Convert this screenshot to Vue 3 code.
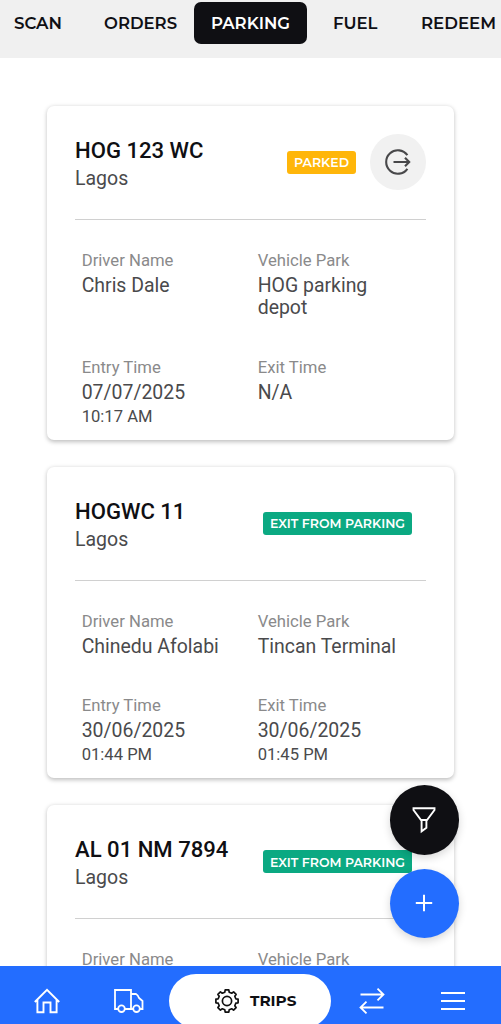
<script setup>
const tabs = [
  { name: 'SCAN', width: 48 },
  { name: 'ORDERS', width: 73 },
  { name: 'PARKING', width: 79, active: true },
  { name: 'FUEL', width: 44.5 },
  { name: 'REDEEM', width: 75 },
]
const trips = [
  {
    plate: 'HOG 123 WC', city: 'Lagos', status: 'PARKED', parked: true,
    fields: [
      { label: 'Driver Name', value: 'Chris Dale' },
      { label: 'Vehicle Park', value: 'HOG parking depot' },
      { label: 'Entry Time', value: '07/07/2025', time: '10:17 AM' },
      { label: 'Exit Time', value: 'N/A' },
    ],
  },
  {
    plate: 'HOGWC 11', city: 'Lagos', status: 'EXIT FROM PARKING',
    fields: [
      { label: 'Driver Name', value: 'Chinedu Afolabi' },
      { label: 'Vehicle Park', value: 'Tincan Terminal' },
      { label: 'Entry Time', value: '30/06/2025', time: '01:44 PM' },
      { label: 'Exit Time', value: '30/06/2025', time: '01:45 PM' },
    ],
  },
  {
    plate: 'AL 01 NM 7894', city: 'Lagos', status: 'EXIT FROM PARKING',
    fields: [
      { label: 'Driver Name', value: '' },
      { label: 'Vehicle Park', value: '' },
    ],
  },
]
</script>

<template>
  <div class="app">
    <nav class="tabs">
      <a v-for="t in tabs" :key="t.name" class="tab" :class="{ active: t.active }">
        <svg :width="t.width" height="24"><text class="brand" x="0" y="17.5" :textLength="t.width" lengthAdjust="spacingAndGlyphs">{{ t.name }}</text></svg>
      </a>
    </nav>

    <main class="list">
      <article v-for="trip in trips" :key="trip.plate" class="card">
        <header class="head">
          <div>
            <h2 class="plate">{{ trip.plate }}</h2>
            <p class="city">{{ trip.city }}</p>
          </div>
          <div class="status">
            <span class="badge" :class="{ parked: trip.parked }">
              <svg :width="trip.parked ? 55 : 135" height="22"><text class="brand small" x="0" y="15.7" :textLength="trip.parked ? 55 : 135" lengthAdjust="spacingAndGlyphs">{{ trip.status }}</text></svg>
            </span>
            <button v-if="trip.parked" class="exit" aria-label="Exit">
              <svg width="28" height="28" viewBox="0 0 28 28" fill="none" stroke="#48484a" stroke-width="2.1">
                <path d="M23.4 7.2A11.7 11.7 0 1 0 23.4 20.8M9.5 14H25.2M21 9.8L25.2 14L21 18.2" />
              </svg>
            </button>
          </div>
        </header>
        <div class="fields">
          <div v-for="f in trip.fields" :key="f.label" class="field">
            <div class="label">{{ f.label }}</div>
            <div class="value">{{ f.value }}</div>
            <div v-if="f.time" class="time">{{ f.time }}</div>
          </div>
        </div>
      </article>
    </main>

    <div class="fabs">
      <button class="fab dark" aria-label="Filter">
        <svg width="26" height="28" viewBox="0 0 26 28" fill="none" stroke="#fff" stroke-width="1.9">
          <path d="M2.5 2.3H23.5V4L16 14H10L2.5 4ZM10.6 14V25.3L15.4 21.7V14" />
        </svg>
      </button>
      <button class="fab blue" aria-label="Add">
        <svg width="18" height="18" viewBox="0 0 18 18" stroke="#fff" stroke-width="2"><path d="M9 .8V17.2M.8 9H17.2" /></svg>
      </button>
    </div>

    <nav class="bottom">
      <div class="item home">
        <svg width="28" height="26" viewBox="0 0 28 26" fill="none" stroke="#fff" stroke-width="1.9">
          <path d="M1.8 14L14 1.8L26.2 14M4.4 11.5V24.3H10.5V14.5H17.5V24.3H23.6V11.5" />
        </svg>
      </div>
      <div class="item truck">
        <svg width="30" height="24" viewBox="0 0 30 24" fill="none" stroke="#fff" stroke-width="1.8">
          <path d="M4 20H1V1H17V20H11M17 5H22Q24 6 25 9L28.5 12V20H26M17 20H19" />
          <circle cx="7.5" cy="19.7" r="3.3" /><circle cx="22.5" cy="19.7" r="3.3" />
        </svg>
      </div>
      <div class="pill">
        <svg width="24" height="24" viewBox="0 0 24 24" fill="none" stroke="#111" stroke-width="1.7" stroke-linejoin="round">
          <path d="M9.8 3.2L10.2 .9H13.8L14.2 3.2L16.7 4.2L18.6 2.9L21.1 5.4L19.8 7.3L20.8 9.8L23.1 10.2V13.8L20.8 14.2L19.8 16.7L21.1 18.6L18.6 21.1L16.7 19.8L14.2 20.8L13.8 23.1H10.2L9.8 20.8L7.3 19.8L5.4 21.1L2.9 18.6L4.2 16.7L3.2 14.2L.9 13.8V10.2L3.2 9.8L4.2 7.3L2.9 5.4L5.4 2.9L7.3 4.2Z" />
          <circle cx="12" cy="12" r="4.6" />
        </svg>
        <svg width="47" height="24"><text class="brand trips" x="0" y="17" textLength="46.5" lengthAdjust="spacingAndGlyphs">TRIPS</text></svg>
      </div>
      <div class="item swap">
        <svg width="26" height="26" viewBox="0 0 26 26" fill="none" stroke="#fff" stroke-width="1.8">
          <path d="M1.5 6.5H24.5M18.5 .6L24.5 6.5L18.5 12.4M24.5 19.5H1.5M7.5 13.6L1.5 19.5L7.5 25.4" />
        </svg>
      </div>
      <div class="item menu">
        <svg width="24" height="18" viewBox="0 0 24 18" stroke="#fff" stroke-width="1.9"><path d="M0 1H24M0 9H24M0 17H24" /></svg>
      </div>
    </nav>
  </div>
</template>

<style>
body { margin: 0; background: #fff; overflow: hidden; }
</style>

<style scoped>
.app { position: relative; width: 501px; height: 1024px; overflow: hidden; display: flex; flex-direction: column; background: #fff; font-family: Roboto, sans-serif; color: #4a4a4c; }
svg { display: block; flex: none; overflow: visible; }
button { border: 0; padding: 0; display: flex; align-items: center; justify-content: center; }
.brand { font: 600 16.6px Montserrat, Lato, sans-serif; fill: #0f0f14; }
.small { font-size: 12.8px; fill: #fff; }
.trips { font-size: 15.3px; font-weight: 700; }
.tabs { flex: none; height: 58px; box-sizing: border-box; padding: 2px 0 0 1px; background: #f0f0f0; display: flex; align-items: flex-start; margin-left: -4px; }
.tab { flex: none; height: 42px; padding: 0 17px; border-radius: 7px; display: flex; align-items: center; margin-right: 9px; }
.tab:nth-child(2) { margin-left: -1px; margin-right: 0; }
.tab:nth-child(4) { margin-right: 9.5px; }
.tab.active { background: #0f0f13; }
.tab.active .brand { fill: #fff; }
.list { flex: 1; min-height: 0; padding: 48px 47px 0; display: flex; flex-direction: column; gap: 27px; overflow: hidden; }
.card { flex: none; width: 407px; box-sizing: border-box; padding: 0 28px 13.4px; border-radius: 7px; background: #fff; box-shadow: 0 1.4px 4px rgba(0, 0, 0, .25); }
.head { height: 113.6px; box-sizing: border-box; border-bottom: 1.4px solid #d0d0d0; padding-top: 28px; display: flex; justify-content: space-between; align-items: flex-start; }
.plate { margin: 0; font-size: 22.1px; line-height: 32px; font-weight: 500; color: #0f0f13; white-space: nowrap; }
.city { margin: 0; font-size: 19.5px; line-height: 25px; }
.status { height: 56.4px; display: flex; align-items: center; gap: 14px; }
.badge { height: 23px; display: flex; align-items: center; padding: 0 7px; border-radius: 3px; background: #0ba982; margin-right: 14px; }
.badge.parked { background: #ffb60a; margin-right: 0; }
.exit { width: 55.6px; height: 55.6px; border-radius: 50%; background: #f1f1f1; }
.fields { padding: 31px 0 0 6.7px; display: grid; grid-template-columns: 176px 150px; row-gap: 38px; }
.label { font-size: 16.7px; line-height: 20px; color: #8a8a8b; }
.value { margin-top: 4px; max-width: 145px; font-size: 19.45px; line-height: 22.6px; }
.time { margin-top: 2.2px; font-size: 16.6px; line-height: 20px; }
.fabs { position: absolute; left: 389.7px; top: 785px; display: flex; flex-direction: column; gap: 14px; }
.fab { width: 69.5px; height: 69.5px; border-radius: 50%; box-shadow: 0 3px 9px rgba(0, 0, 0, .16); }
.dark { background: #0f0f13; }
.blue { background: #236dff; }
.bottom { position: relative; flex: none; height: 58px; background: #236dff; display: grid; grid-template-columns: 94px 75px 162px 81px 81px; align-items: start; overflow: hidden; }
.item { height: 70px; display: flex; align-items: center; justify-content: center; }
.truck { padding-right: 6px; }
.pill { margin-top: 8px; height: 54px; border-radius: 27px; background: #fff; display: flex; align-items: center; gap: 11px; padding-left: 46px; box-sizing: border-box; }
</style>
